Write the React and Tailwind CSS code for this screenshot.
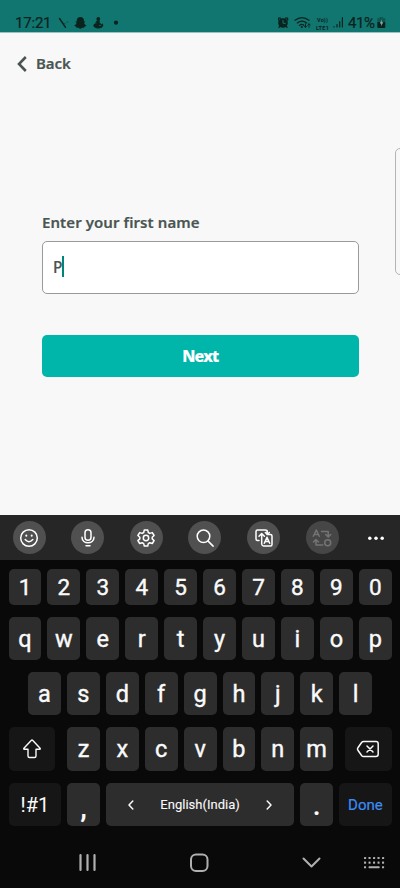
import React from "react";

const stroke = {
  fill: "none",
  stroke: "currentColor",
  strokeLinecap: "round",
  strokeLinejoin: "round",
};

function StatusBar() {
  return (
    <header className="flex h-8 items-start justify-between bg-[#11766f] pt-[14px] pr-[14px] pl-[15px] font-['Roboto','Liberation_Sans',sans-serif] text-[#09231f]">
      <div className="flex items-center">
        <span className="w-[36px] text-[15px] leading-[18px] tracking-[-0.2px] [-webkit-text-stroke:0.2px]">17:21</span>
        <svg width="70" height="18" viewBox="51 14 70 18" fill="currentColor">
          <path d="M59.500 18.500 65.500 27.300" {...stroke} strokeWidth="1.4" />
          <path d="M64 23l1.5 1M67 22h1" {...stroke} strokeWidth="0.8" opacity=".6" />
          <path d="M80.400 17c2.600 0 3.700 1.700 3.600 4.400l1.200.1c.1.8-.7 1-1.100 1.300.4 1.400 1.300 2.200 2.400 2.700-.4.9-1.600.9-2 1.200l-.4 1c-1 .1-1.500-.2-2.200.4-.9.7-2.200.7-3.100 0-.7-.6-1.200-.3-2.200-.4l-.4-1c-.4-.3-1.600-.3-2-1.200 1.200-.5 2-1.300 2.400-2.700-.4-.3-1.200-.5-1.100-1.300l1.200-.1c-.1-2.700 1-4.400 3.700-4.400z" />
          <circle cx="98.300" cy="19" r="1.900" />
          <path d="M97 20.500h2.700v2.700l1-.2v1.300c.8.3 1.600-.2 2-1l.7 2.300c-.9 2-2.900 3-5.200 2.900-2.700-.1-4.700-1.300-4.800-2.700-.1-1.600 1.500-1.900 2-3.300z" />
          <path d="M93.500 23h3M99 25.500h2" stroke="#11766f" strokeWidth=".7" />
          <circle cx="116" cy="22.700" r="2.100" />
        </svg>
      </div>
      <div className="flex items-center">
        <svg width="36" height="18" viewBox="277.500 14 36 18" fill="currentColor">
          <circle cx="282.500" cy="23" r="4.800" />
          <path d="M277.900 20v-1.800h2.100M287.100 20v-1.800h-2.100M279.200 26.300l-.8 1M285.800 26.300l.8 1" {...stroke} strokeWidth="1.300" />
          <path d="M282.500 20.500v2.800h2.300" {...stroke} stroke="#11766f" strokeWidth="1" />
          <path d="M294.500 20.300q7-5.500 14 0M296.800 22.900q4.700-3.600 9.400 0M298.900 25.400q2.500-1.900 4.500 0" {...stroke} strokeWidth="1.200" />
          <circle cx="301.300" cy="27" r="1.100" />
          <path d="M305 23.800v3.500m-1.200-1.200 1.200 1.200 1.200-1.200M308.500 27.300v-3.500m-1.200 1.200 1.200-1.200 1.200 1.200" {...stroke} strokeWidth=".9" />
        </svg>
        <div className="flex w-[17px] scale-y-110 flex-col items-center text-[5.500px] font-bold whitespace-nowrap">
          <span className="leading-[6.500px] tracking-[0.1px]">Vo))</span>
          <span className="leading-[6.500px] tracking-[0.300px]">LTE1</span>
        </div>
        <svg width="14" height="18" viewBox="330 14 14 18" {...stroke} strokeWidth="1.200">
          <path d="M333 26.500v.5M336 24.500v2.500M338.700 21.500v5.500M341.400 17.500v9.500" />
        </svg>
        <span className="ml-[3px] w-[29px] text-[15px] leading-[18px] tracking-[-0.400px] whitespace-nowrap [-webkit-text-stroke:0.2px]">41%</span>
        <svg width="9" height="18" viewBox="377 14 9 18">
          <rect x="379.500" y="17" width="3.500" height="2" fill="#0d5951" />
          <rect x="377.300" y="18" width="8" height="5" rx="1" fill="#0d5951" />
          <rect x="377.300" y="22" width="8" height="6" rx="1" fill="#09231f" />
          <path d="M381.800 19.500l-2 4h1.500l-.3 2.800 2.300-4h-1.600z" fill="#8cb5b1" />
        </svg>
      </div>
    </header>
  );
}

function NameForm() {
  return (
    <main className="relative flex h-[483px] flex-col overflow-hidden border-t border-[#9ac1be] bg-[#f8f8f8] font-['Noto_Sans','Open_Sans',sans-serif] text-[#4a5552]">
      <button className="mt-5 ml-4 flex h-[22px] items-center self-start">
        <svg width="12" height="18" viewBox="0 0 12 18" {...stroke} strokeWidth="2.600" strokeLinecap="butt" strokeLinejoin="miter">
          <path d="M9.800 2 3 9l6.800 7" />
        </svg>
        <span className="-mt-0.5 ml-2 text-[15px] leading-[22px] font-semibold tracking-[-0.1px] [-webkit-text-stroke:0.2px]">Back</span>
      </button>
      <form className="mt-[136px] ml-[42px] flex w-[316.500px] flex-col">
        <label className="text-[15px] leading-[22px] font-semibold tracking-[0.080px] whitespace-nowrap [-webkit-text-stroke:0.2px]">Enter your first name</label>
        <div className="mt-[8px] flex h-[52.500px] items-center rounded-[5px] border border-[#9a9a9a] bg-white pl-[10px]">
          <span className="w-[8.500px] text-[15.500px] leading-[22px] font-medium [-webkit-text-stroke:0.2px]">P</span>
          <span className="mb-px h-[21px] w-[2px] bg-[#00857c]" />
        </div>
        <button type="button" className="mt-[41.500px] h-[42px] rounded-[5px] bg-[#00b5aa] text-[16px] leading-[22px] font-extrabold text-white">
          <span className="tracking-[-0.800px] [-webkit-text-stroke:0.2px]">Next</span>
        </button>
      </form>
      <div className="absolute top-[115px] left-[395px] h-[127px] w-5 rounded-[5px] border border-[#b4b4b4]" />
    </main>
  );
}

const tools = [
  <g key="smile" {...stroke} strokeWidth="1.500">
    <circle cx="12" cy="12" r="8.300" />
    <path d="M8.200 13.500q3.800 4.400 7.600 0" />
    <path d="M9.300 9.600v.2M14.700 9.600v.2" strokeWidth="2" />
  </g>,
  <g key="mic" {...stroke} strokeWidth="1.500">
    <rect x="9" y="3.800" width="6" height="10.400" rx="3" />
    <path d="M6 11.300c0 7.400 12 7.400 12 0M10 19.800h4" />
  </g>,
  <g key="gear" {...stroke} strokeWidth="1.500">
    <circle cx="12" cy="12" r="2.700" />
    <path d="M10.300 3.900h3.400l.6 2.600 1.500.9 2.500-.8 1.800 2.900-1.900 1.700v1.700l1.900 1.700-1.800 2.900-2.500-.8-1.500.9-.6 2.500h-3.400l-.6-2.500-1.500-.9-2.500.8-1.800-2.900 1.900-1.700v-1.700l-1.900-1.700 1.800-2.900 2.500.8 1.500-.9z" />
  </g>,
  <g key="search" {...stroke} strokeWidth="1.500">
    <circle cx="10.500" cy="10.300" r="6.300" />
    <path d="M15.100 15.100l5 5" />
  </g>,
  <g key="translate" {...stroke} strokeWidth="1.500">
    <path d="M7 14.500H5.500q-1.500 0-1.500-1.500V5.500Q4 4 5.500 4h8Q15 4 15.400 5.500" />
    <path d="M15 8.500h3.500q1.500 0 1.500 1.500v8.500q0 1.500-1.500 1.500h-7Q10 20 9.700 18V8M7 10.300l2.700-2.700 2.700 2.700M15.200 5v3.200M13.300 6.500l2 2 2-2" />
    <path d="M12.300 17.300l2.700-6 2.700 6M13.200 15.500h3.600" />
  </g>,
  <g key="convert" {...stroke} strokeWidth="1.500">
    <path d="M3.300 10.300 6.300 4l3 6.300M4.300 8.400h4M11.500 5.500h6.700v5M15.700 8.500l2.500 2.500 2.500-2.500M12.700 19H6v-5M3.500 16 6 13.500 8.500 16" />
    <circle cx="17.700" cy="16.800" r="3" />
  </g>,
];

function Toolbar() {
  return (
    <div className="flex h-[45px] items-center bg-[#262626] pl-[12.7px] text-white">
      <div className="flex gap-[25.6px]">
        {tools.map((icon, i) => (
          <button
            key={i}
            className={`flex h-[33px] w-[33px] items-center justify-center rounded-full ${i === 5 ? "bg-[#464646] text-[#747474]" : "bg-[#505050]"}`}
          >
            <svg width="24" height="24" viewBox="0 0 24 24">{icon}</svg>
          </button>
        ))}
      </div>
      <svg className="ml-[28px]" width="18" height="6" viewBox="0 0 18 6" fill="currentColor">
        <circle cx="2.800" cy="3.300" r="1.750" />
        <circle cx="9" cy="3.300" r="1.750" />
        <circle cx="15.200" cy="3.300" r="1.750" />
      </svg>
    </div>
  );
}

function Key({ children, className = "flex-1 bg-[#2d2d2d] text-[23.500px] [-webkit-text-stroke:0.4px]" }) {
  return <button className={`flex items-center justify-center rounded-[5px] ${className}`}>{children}</button>;
}

function Letters({ keys }) {
  return [...keys].map((k) => (
    <Key key={k}>
      <span className="leading-[30px]">{k}</span>
    </Key>
  ));
}

function Keyboard() {
  return (
    <section className="bg-[#090909] font-['Roboto','Liberation_Sans',sans-serif] text-[#fafafa]">
      <Toolbar />
      <div className="flex flex-col gap-3 pr-[8.300px] pl-[8.500px] pt-[9px]">
        <div className="flex h-9 gap-[6px]">
          {[..."1234567890"].map((n) => (
            <Key key={n} className="flex-1 bg-[#2d2d2d] text-[22.500px] leading-[30px] [-webkit-text-stroke:0.4px]">{n}</Key>
          ))}
        </div>
        <div className="flex h-[43px] gap-[6px]">
          <Letters keys="qwertyuiop" />
        </div>
        <div className="flex h-[43px] gap-[6px] px-[19.500px]">
          <Letters keys="asdfghjkl" />
        </div>
        <div className="flex h-11 gap-3">
          <Key className="w-[46.700px] bg-[#161616]">
            <svg width="20" height="22" viewBox="0 0 20 22" {...stroke} strokeWidth="1.400">
              <path d="M9.200 2.500q.8-.8 1.600 0l7.300 7.800q.7 1-.5 1H14v6.700q0 1.500-1.500 1.500h-5Q6 19.500 6 18v-6.700H2.400q-1.200 0-.5-1z" />
            </svg>
          </Key>
          <div className="flex flex-1 gap-[6px]">
            <Letters keys="zxcvbnm" />
          </div>
          <Key className="w-[46.700px] bg-[#161616]">
            <svg width="24" height="18" viewBox="0 0 24 18" {...stroke} strokeWidth="1.500">
              <path d="M7.500 1.500H20q2.200 0 2.200 2.200v10.600q0 2.200-2.200 2.200H7.500q-1 0-1.700-.8L1.900 10.200q-.9-1.200 0-2.400L5.800 2.300q.7-.8 1.700-.8z" />
              <path d="M11 6l6 6M17 6l-6 6" />
            </svg>
          </Key>
        </div>
        <div className="flex h-[43px] gap-[6px]">
          <Key className="w-[52.700px] bg-[#161616] text-[20px]">!#1</Key>
          <Key className="w-[33px] bg-[#2d2d2d] pt-[7px] text-[27px] leading-[30px] font-bold">,</Key>
          <Key className="flex-1 bg-[#2d2d2d] text-[13px]">
            <svg width="8" height="12" viewBox="0 0 8 12" {...stroke} strokeWidth="1.500">
              <path d="M5.800 2 2 6l3.800 4" />
            </svg>
            <span className="mx-[25px] w-[80px] text-center tracking-[0.020px] whitespace-nowrap [-webkit-text-stroke:0.1px]">English(India)</span>
            <svg width="8" height="12" viewBox="0 0 8 12" {...stroke} strokeWidth="1.500">
              <path d="M2.200 2 6 6l-3.800 4" />
            </svg>
          </Key>
          <Key className="w-[33px] bg-[#2d2d2d] pt-1 text-[25px] leading-[30px] font-bold">.</Key>
          <Key className="w-[52.700px] bg-[#161616] text-[15px] text-[#3c8cf5] [-webkit-text-stroke:0.2px]">
            <span className="pt-px">Done</span>
          </Key>
        </div>
      </div>
      <nav className="flex h-[62px] items-center pt-[11px] text-[#b0b0b0]">
        <svg className="ml-[78px]" width="19" height="20" viewBox="0 0 19 20" {...stroke} strokeWidth="2.200">
          <path d="M2.500 2v15M9.500 2v15M16.500 2v15" />
        </svg>
        <svg className="ml-[92px]" width="20" height="20" viewBox="0 0 20 20" {...stroke} strokeWidth="2">
          <rect x="2" y="1.500" width="16.500" height="16.500" rx="5" />
        </svg>
        <svg className="ml-[92px]" width="20" height="12" viewBox="0 0 20 12" {...stroke} strokeWidth="2">
          <path d="M2.500 1.500l8 8 8-8" />
        </svg>
        <svg className="ml-[42px]" width="23" height="14" viewBox="0 0 23 14" fill="currentColor">
          {[1, 5.600, 10.200].map((y) =>
            [1, 5.500, 10, 14.500, 19].map((x) =>
              y > 10 && x > 3 && x < 17 ? null : <rect key={`${x}-${y}`} x={x} y={y} width="2.100" height="2.100" rx=".4" />
            )
          )}
          <rect x="5.500" y="10.300" width="11.200" height="2" rx=".7" />
        </svg>
      </nav>
    </section>
  );
}

export default function App() {
  return (
    <div className="h-[888px] w-[400px] overflow-hidden bg-[#090909]">
      <StatusBar />
      <NameForm />
      <Keyboard />
    </div>
  );
}
